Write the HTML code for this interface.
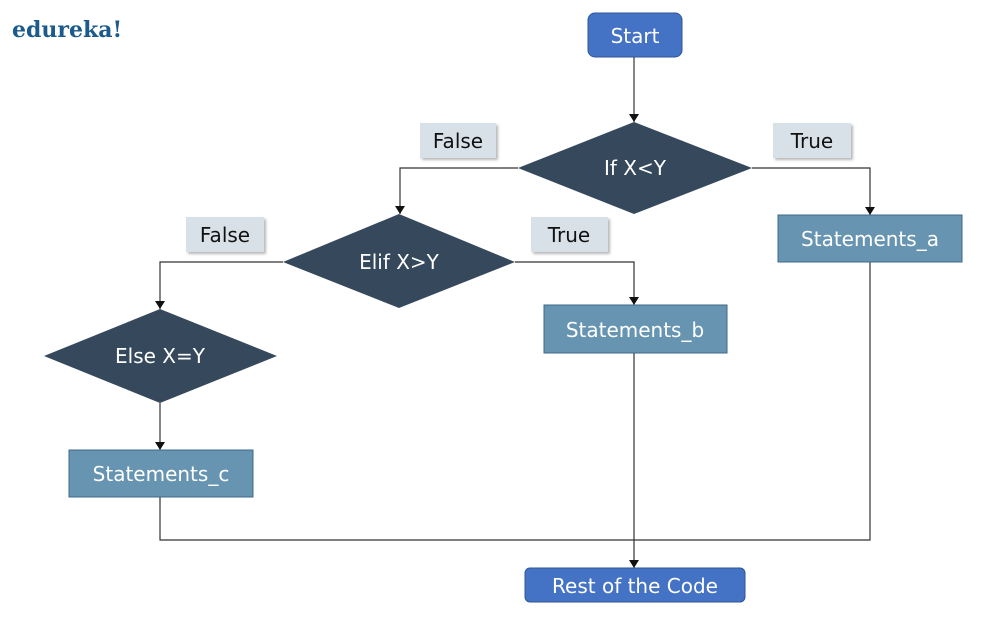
<!DOCTYPE html>
<html><head><meta charset="utf-8"><style>
html,body{margin:0;padding:0;background:#fff;width:1004px;height:627px;overflow:hidden}
svg{display:block}
text{font-family:"DejaVu Sans","Liberation Sans",sans-serif;}
</style></head><body>
<svg width="1004" height="627" viewBox="0 0 1004 627">
<defs>
<marker id="a" markerWidth="10" markerHeight="10" refX="8" refY="5" orient="auto" markerUnits="userSpaceOnUse">
<path d="M0,0 L8,5 L0,10 z" fill="#111"/></marker>
<filter id="sh"><feDropShadow dx="2" dy="2" stdDeviation="1.2" flood-color="#888" flood-opacity="0.6"/></filter>
</defs>
<text x="12" y="37" font-weight="bold" font-size="22" fill="#1b5a8a" style="font-family:'DejaVu Serif','Liberation Serif',serif">edureka!</text>
<g stroke="#333" stroke-width="1.2" fill="none">
<line x1="634" y1="57" x2="634" y2="122" marker-end="url(#a)"/>
<polyline points="518,168 400,168 400,214" marker-end="url(#a)"/>
<polyline points="752,168 870,168 870,215" marker-end="url(#a)"/>
<polyline points="283,262 160,262 160,309" marker-end="url(#a)"/>
<polyline points="515,262 634,262 634,305" marker-end="url(#a)"/>
<line x1="160" y1="403" x2="160" y2="450" marker-end="url(#a)"/>
<polyline points="160,497 160,540 870,540 870,262"/>
<line x1="634" y1="353" x2="634" y2="568" marker-end="url(#a)"/>
</g>
<rect x="588" y="13" width="94" height="44" rx="7" fill="#4472c4" stroke="#2f5597"/>
<text x="635" y="43" fill="#fff" font-size="20" text-anchor="middle">Start</text>
<polygon points="518,168 634,122 752,168 634,214" fill="#36495c"/>
<text x="635" y="175" fill="#fff" font-size="20" text-anchor="middle">If X&lt;Y</text>
<polygon points="283,262 399,214 515,262 399,308" fill="#36495c"/>
<text x="399" y="269" fill="#fff" font-size="20" text-anchor="middle">Elif X&gt;Y</text>
<polygon points="44,356 160,309 277,356 160,403" fill="#36495c"/>
<text x="160" y="363" fill="#fff" font-size="20" text-anchor="middle">Else X=Y</text>
<g filter="url(#sh)" fill="#d7e1e7">
<rect x="420" y="123" width="76" height="35"/>
<rect x="773" y="123" width="78" height="35"/>
<rect x="186" y="217" width="78" height="35"/>
<rect x="531" y="217" width="77" height="35"/>
</g>
<g font-size="20" fill="#111" text-anchor="middle">
<text x="458" y="148">False</text>
<text x="812" y="148">True</text>
<text x="225" y="242">False</text>
<text x="569" y="242">True</text>
</g>
<g fill="#6694b1" stroke="#3e6a8a">
<rect x="778" y="215" width="184" height="47"/>
<rect x="544" y="305" width="183" height="48"/>
<rect x="69" y="450" width="184" height="47"/>
</g>
<g font-size="20" fill="#fff" text-anchor="middle">
<text x="870" y="246">Statements_a</text>
<text x="635" y="337">Statements_b</text>
<text x="161" y="481">Statements_c</text>
</g>
<rect x="525" y="568" width="220" height="34" rx="5" fill="#4472c4" stroke="#2f5597"/>
<text x="635" y="593" fill="#fff" font-size="20" text-anchor="middle">Rest of the Code</text>
</svg>
</body></html>
